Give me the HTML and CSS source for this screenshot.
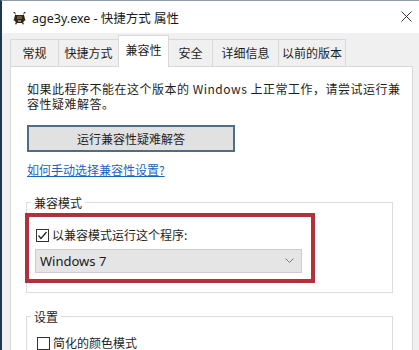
FILE: index.html
```html
<!DOCTYPE html>
<html lang="zh-CN">
<head>
<meta charset="utf-8">
<title>age3y.exe - 快捷方式 属性</title>
<link rel="stylesheet" href="styles.css">
</head>
<body>
<div class="window">
  <div class="titlebar">
    <svg class="app-icon" width="15" height="14" viewBox="0 0 15 14">
      <path d="M1 1 L4 4 L3 1 Z M14 1 L11 4 L12 1 Z" fill="#3a2f22"/>
      <path d="M3 4 L12 4 L13 8 L11 12 L4 12 L2 8 Z" fill="#2e261c"/>
      <path d="M5 5 L10 5 L10 8 L5 8 Z" fill="#6e5b3f"/>
      <path d="M1 9 L3 8 L3 10 Z M14 9 L12 8 L12 10 Z M3 12 L5 12 L4 14 Z M10 12 L12 12 L11 14 Z" fill="#3a2f22"/>
      <rect x="6" y="9" width="3" height="2" fill="#8c8270"/>
    </svg>
    <span class="title">age3y.exe - 快捷方式 属性</span>
    <svg class="close" width="11" height="11" viewBox="0 0 11 11">
      <path d="M0.5 0.5 L10.5 10.5 M10.5 0.5 L0.5 10.5" stroke="#333" stroke-width="1"/>
    </svg>
  </div>
  <div class="content">
    <div class="tabs">
      <div class="tab">常规</div>
      <div class="tab">快捷方式</div>
      <div class="tab active">兼容性</div>
      <div class="tab">安全</div>
      <div class="tab">详细信息</div>
      <div class="tab">以前的版本</div>
    </div>
    <div class="panel">
      <p class="intro"><span class="line">如果此程序不能在这个版本的 Windows 上正常工作，请尝试运行兼</span><span class="line">容性疑难解答。</span></p>
      <button class="btn">运行兼容性疑难解答</button>
      <a class="link" href="#">如何手动选择兼容性设置?</a>
      <fieldset class="group">
        <legend>兼容模式</legend>
        <div class="highlight">
          <label class="check">
            <span class="box">
              <svg width="11" height="11" viewBox="0 0 11 11"><polyline points="1.5,5.5 4,8.5 9.5,2" fill="none" stroke="#222" stroke-width="1.2"/></svg>
            </span>
            以兼容模式运行这个程序:
          </label>
          <div class="select">
            <span>Windows 7</span>
            <svg width="9" height="6" viewBox="0 0 9 6"><polyline points="0.5,0.5 4.5,4.5 8.5,0.5" fill="none" stroke="#777" stroke-width="1"/></svg>
          </div>
        </div>
      </fieldset>
      <fieldset class="group settings">
        <legend>设置</legend>
        <label class="check">
          <span class="box"></span>
          简化的颜色模式
        </label>
      </fieldset>
    </div>
  </div>
</div>
</body>
</html>
```

FILE: styles.css
```css
* { box-sizing: border-box; }
html, body {
  margin: 0;
  padding: 0;
}
body {
  width: 419px;
  height: 350px;
  overflow: hidden;
  background: #f0f0f0;
  font-family: "Noto Sans CJK SC", "Noto Sans", sans-serif;
  font-size: 12px;
  color: #1e1e1e;
}
.window {
  height: 350px;
  display: flex;
  flex-direction: column;
  border-left: 2px solid #1d3652;
  border-top: 1px solid #8d9cab;
}
.titlebar {
  height: 32px;
  flex: none;
  background: #fff;
  display: flex;
  align-items: center;
  padding: 0 7px 0 10px;
}
.app-icon { flex: none; margin-top: 2px; }
.title {
  margin-left: 5px;
  font-family: "Noto Sans", "Noto Sans CJK SC", sans-serif;
  font-size: 12.5px;
  color: #1a1a1a;
  flex: 1;
}
.close { flex: none; margin-top: -2px; }

.content {
  flex: 1;
  display: flex;
  flex-direction: column;
  padding: 2px 6px 0 8px;
  background: #f0f0f0;
}
.tabs {
  height: 31px;
  display: grid;
  grid-template-columns: 48px 60px 50px 44px 66px 67px;
  align-items: end;
  position: relative;
  z-index: 1;
}
.tab {
  height: 27px;
  border: 1px solid #d9d9d9;
  border-bottom: 0;
  margin-right: -1px;
  background: #f0f0f0;
  display: flex;
  align-items: center;
  justify-content: center;
  line-height: 15px;
  padding-bottom: 1px;
  color: #1e1e1e;
}
.tab.active {
  height: 32px;
  margin-bottom: -1px;
  background: #fff;
  padding-bottom: 4px;
  position: relative;
}
.panel {
  flex: 1;
  background: #fff;
  border: 1px solid #d9d9d9;
  padding: 14px 16px;
}
.intro {
  margin: 0;
  display: flex;
  flex-direction: column;
  white-space: nowrap;
  letter-spacing: 0.5px;
}
.intro .line {
  display: block;
  height: 15px;
  line-height: 15px;
}
.btn {
  display: block;
  margin-top: 14px;
  width: 208px;
  height: 27px;
  background: #e1e1e1;
  border: 2px solid #4f6d87;
  font-family: inherit;
  font-size: 12px;
  color: #1e1e1e;
  padding: 0;
}
.link {
  display: inline-block;
  margin-top: 10px;
  line-height: 15px;
  color: #1a64c0;
  text-decoration: underline;
}
.group {
  margin: 17px 0 0 -1px;
  width: 367px;
  border: 1px solid #dcdcdc;
  padding: 0 0 9px 0;
}
.group legend {
  margin-left: 4px;
  padding: 0 3px;
  line-height: 15px;
}
.highlight {
  margin: 3px 0 0 -2px;
  width: 290px;
  border: 4px solid #b2303b;
  padding: 11px 9px 6px 7px;
}
.check {
  display: flex;
  align-items: center;
  gap: 3px;
  line-height: 14px;
}
.box {
  width: 13px;
  height: 13px;
  flex: none;
  border: 1px solid #333;
  background: #fff;
  display: flex;
  align-items: center;
  justify-content: center;
}
.select {
  margin: 7px 0 0 -1px;
  height: 24px;
  width: 267px;
  background: #e5e5e5;
  border: 1px solid #cdcdcd;
  display: flex;
  align-items: center;
  justify-content: space-between;
  padding: 0 7px 0 4px;
  font-family: "Noto Sans", sans-serif;
  font-size: 13px;
  color: #1a1a1a;
}
.settings {
  margin-top: 16px;
  padding: 12px 0 10px 10px;
}
.settings legend {
  margin-left: -6px;
}
```
